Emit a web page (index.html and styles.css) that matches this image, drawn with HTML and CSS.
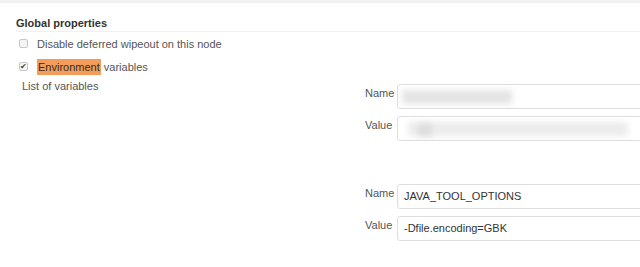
FILE: index.html
```html
<!DOCTYPE html>
<html lang="en">
<head>
    <meta charset="UTF-8">
    <title>Global properties</title>
    <link rel="stylesheet" href="styles.css">
</head>
<body>
    <div class="top-bar"></div>

    <div class="section">
        <div class="section-header">Global properties</div>

        <div class="option">
            <span class="check"></span>
            <span class="option-label">Disable deferred wipeout on this node</span>
        </div>
        <div class="option">
            <span class="check checked">&#10004;</span>
            <span class="option-label"><span class="highlight">Environment</span> variables</span>
        </div>

        <div class="vars">
            <div class="vars-title">List of variables</div>
            <div class="vars-list">
                <div class="var-block">
                    <div class="field-label">Name</div>
                    <div class="field field-blur">
                        <span class="smudge smudge-name"></span>
                    </div>
                    <div class="field-label">Value</div>
                    <div class="field field-blur">
                        <span class="smudge smudge-value"></span>
                        <span class="smudge smudge-value2"></span>
                    </div>
                </div>
                <div class="var-block">
                    <div class="field-label">Name</div>
                    <div class="field">JAVA_TOOL_OPTIONS</div>
                    <div class="field-label">Value</div>
                    <div class="field">-Dfile.encoding=GBK</div>
                </div>
            </div>
        </div>
    </div>
</body>
</html>
```

FILE: styles.css
```css
* {
    margin: 0;
    padding: 0;
    box-sizing: border-box;
}

body {
    font-family: 'Liberation Sans', Arial, sans-serif;
    font-size: 11px;
    background: #fff;
    color: #333;
    overflow: hidden;
    width: 640px;
    height: 267px;
}

.top-bar {
    height: 3px;
    background: #f2f2f2;
}

.section {
    padding: 13px 0 0 16px;
}

.section-header {
    font-weight: bold;
    font-size: 11px;
    color: #333;
    padding: 1px 0 2px;
    border-bottom: 1px solid #f0f0f0;
}

.option {
    display: flex;
    align-items: center;
    height: 23px;
    padding-left: 3px;
}

.check {
    width: 9px;
    height: 9px;
    border: 1px solid #c8c8c8;
    border-radius: 2px;
    background: #f4f4f4;
    font-size: 8px;
    line-height: 8px;
    text-align: center;
    color: #444;
    margin-right: 9px;
}

.option-label {
    color: #555;
    font-size: 11px;
}

.highlight {
    background: #f39d5c;
    color: #3a2a1a;
    padding: 2px 1px;
}

.vars {
    display: flex;
    margin-top: 2px;
}

.vars-title {
    flex-shrink: 0;
    width: 344px;
    padding-left: 6px;
    color: #555;
}

.vars-list {
    flex-shrink: 0;
    width: 280px;
    overflow: hidden;
    padding-top: 4px;
}

.var-block {
    display: grid;
    grid-template-columns: 37px 300px;
    row-gap: 7px;
    margin-bottom: 43px;
}

.var-block:last-child {
    margin-bottom: 0;
}

.field-label {
    color: #555;
    padding-top: 3px;
    padding-left: 5px;
}

.field {
    height: 25px;
    border: 1px solid #dedede;
    border-radius: 3px;
    padding: 0 6px;
    line-height: 23px;
    color: #333;
    position: relative;
    overflow: hidden;
}

.smudge {
    position: absolute;
    background: #e4e4e4;
    filter: blur(3px);
}

.smudge-name {
    left: 4px;
    top: 5px;
    width: 110px;
    height: 14px;
}

.smudge-value {
    left: 10px;
    top: 5px;
    width: 220px;
    height: 14px;
    background: #ececec;
}

.smudge-value2 {
    left: 20px;
    top: 7px;
    width: 14px;
    height: 12px;
    background: #dcdcdc;
}
```
